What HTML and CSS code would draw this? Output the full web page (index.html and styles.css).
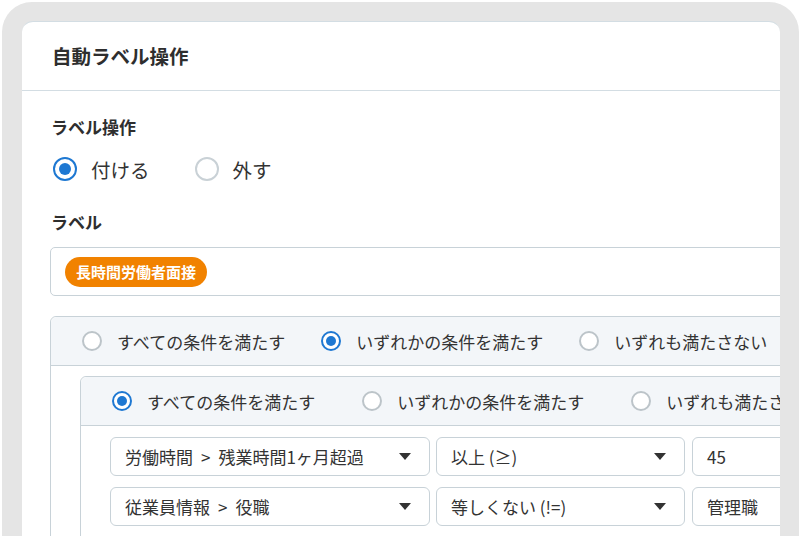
FILE: index.html
```html
<!DOCTYPE html>
<html lang="ja">
<head>
<meta charset="utf-8">
<link rel="stylesheet" href="styles.css">
</head>
<body>
<div class="frame">
  <div class="panel">
    <div class="panel-head">自動ラベル操作</div>
    <div class="panel-body">
      <div class="field-label">ラベル操作</div>
      <div class="radio-row big">
        <label class="radio"><span class="dot on"></span><span>付ける</span></label>
        <label class="radio"><span class="dot"></span><span>外す</span></label>
      </div>
      <div class="field-label second">ラベル</div>
      <div class="label-box"><span class="chip">長時間労働者面接</span></div>
      <div class="group outer">
        <div class="group-head">
          <label class="radio"><span class="dot sm"></span><span>すべての条件を満たす</span></label>
          <label class="radio"><span class="dot sm on"></span><span>いずれかの条件を満たす</span></label>
          <label class="radio"><span class="dot sm"></span><span>いずれも満たさない</span></label>
        </div>
        <div class="group-body">
          <div class="group inner">
            <div class="group-head">
              <label class="radio"><span class="dot sm on"></span><span>すべての条件を満たす</span></label>
              <label class="radio"><span class="dot sm"></span><span>いずれかの条件を満たす</span></label>
              <label class="radio"><span class="dot sm"></span><span>いずれも満たさない</span></label>
            </div>
            <div class="rows">
              <div class="cond">
                <div class="select s1"><span>労働時間<span class="sep">&gt;</span>残業時間1ヶ月超過</span><span class="caret"></span></div>
                <div class="select s2"><span>以上 (≥)</span><span class="caret"></span></div>
                <div class="select s3"><span>45</span></div>
              </div>
              <div class="cond">
                <div class="select s1"><span>従業員情報<span class="sep">&gt;</span>役職</span><span class="caret"></span></div>
                <div class="select s2"><span>等しくない (!=)</span><span class="caret"></span></div>
                <div class="select s3"><span>管理職</span></div>
              </div>
            </div>
          </div>
        </div>
      </div>
    </div>
  </div>
</div>
</body>
</html>
```

FILE: styles.css
```css
* { box-sizing: border-box; }
html, body { margin: 0; padding: 0; background: #fff; }
body {
  width: 800px;
  height: 536px;
  overflow: hidden;
  font-family: "Noto Sans CJK JP", "Noto Sans", sans-serif;
  color: #333;
}
.frame {
  margin: 2px 1px 0 2px;
  height: 534px;
  background: #e5e5e5;
  border-radius: 30px 30px 0 0;
  padding: 19px 19px 0 20px;
}
.panel {
  height: 100%;
  background: #fff;
  border-radius: 11px 11px 0 0;
  border-top: 1px solid #d3dde3;
  overflow: hidden;
}
.panel-head {
  height: 69px;
  border-bottom: 1px solid #d3dde3;
  display: flex;
  align-items: center;
  padding: 0 0 2px 30px;
  font-size: 19.5px;
  font-weight: 700;
  color: #2e2e2e;
}
.panel-body {
  width: 820px;
  padding: 24px 0 0 28px;
}
.field-label {
  font-size: 17px;
  font-weight: 700;
  line-height: 24px;
  color: #2e2e2e;
  padding-left: 1px;
}
.field-label.second { margin-top: 26px; }
.radio-row {
  display: flex;
  gap: 45px;
  margin-top: 15px;
  padding-left: 3px;
  height: 30px;
  align-items: center;
}
.radio {
  display: flex;
  align-items: center;
  gap: 14px;
  white-space: nowrap;
}
.big .radio { font-size: 19.5px; }
.dot {
  width: 24px;
  height: 24px;
  border-radius: 50%;
  border: 2px solid #c9d1d6;
  flex: none;
  position: relative;
  background: #fff;
}
.dot.on { border: 2.5px solid #1e78d2; }
.dot.on::after {
  content: "";
  position: absolute;
  left: 50%;
  top: 50%;
  width: 12px;
  height: 12px;
  margin: -6px 0 0 -6px;
  border-radius: 50%;
  background: #1e78d2;
}
.dot.sm { width: 20px; height: 20px; border-color: #bcc4c9; }
.dot.sm.on { border-color: #1e78d2; }
.dot.sm.on::after { width: 10px; height: 10px; margin: -5px 0 0 -5px; }
.label-box {
  margin-top: 13px;
  height: 49px;
  border: 1px solid #c8d2d8;
  border-radius: 5px;
  display: flex;
  align-items: center;
  padding-left: 14px;
}
.chip {
  background: #f18200;
  color: #fff;
  font-weight: 700;
  font-size: 15px;
  height: 30px;
  line-height: 30px;
  padding: 0 11px;
  border-radius: 15px;
}
.group {
  border: 1px solid #c8d2d8;
  border-radius: 6px;
}
.group.outer { margin-top: 20px; }
.group-head {
  background: #f3f6f9;
  height: 49px;
  border-bottom: 1px solid #c8d2d8;
  border-radius: 6px 6px 0 0;
  display: flex;
  align-items: center;
  padding-left: 31px;
  gap: 36px;
  font-size: 17px;
}
.group-head .radio { gap: 15px; }
.inner .group-head { gap: 47px; height: 49px; }
.group-body { padding: 10px 0 60px 29px; }
.rows {
  padding: 11px 0 60px 29px;
  display: flex;
  flex-direction: column;
  gap: 11px;
}
.cond { display: flex; gap: 6px; }
.select {
  flex: none;
  height: 39px;
  border: 1px solid #c8d2d8;
  border-radius: 6px;
  display: flex;
  align-items: center;
  justify-content: space-between;
  padding: 0 18px 0 14px;
  font-size: 17px;
  white-space: nowrap;
}
.sep { margin: 0 8px; }
.s1 { width: 320px; }
.s2 { width: 249px; }
.s3 { width: 200px; margin-left: 1px; }
.caret {
  width: 0;
  height: 0;
  border-left: 6px solid transparent;
  border-right: 6px solid transparent;
  border-top: 7px solid #333;
}
```
